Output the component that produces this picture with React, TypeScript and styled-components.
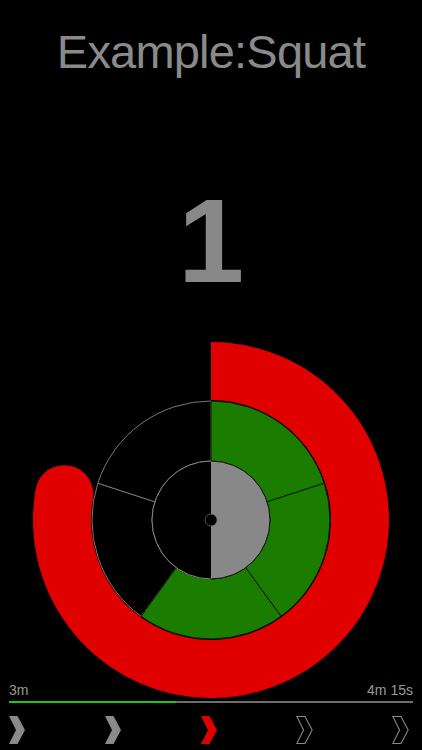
import React from 'react';
import styled, { createGlobalStyle } from 'styled-components';

const GlobalStyle = createGlobalStyle`
    html, body {
        margin: 0;
        padding: 0;
        background: #000;
    }
    body {
        font-family: 'Liberation Sans', Arial, sans-serif;
    }
`;

const Screen = styled.div`
    width: 422px;
    height: 750px;
    background: #000;
    display: flex;
    flex-direction: column;
    align-items: stretch;
    overflow: hidden;
`;

const Title = styled.h1`
    margin: 24px 0 0;
    font-size: 47px;
    line-height: 56px;
    font-weight: 400;
    letter-spacing: -0.8px;
    color: #8a8a8a;
    text-align: center;
`;

const RepCount = styled.div`
    margin-top: 101px;
    font-size: 119px;
    line-height: 119px;
    font-weight: 700;
    color: #888;
    text-align: center;
`;

const ChartWrap = styled.div`
    margin-top: 42px;
    height: 356px;
    display: flex;
    justify-content: center;
`;

const Footer = styled.div`
    margin-top: -16px;
    padding: 0 9px;
    display: flex;
    flex-direction: column;
`;

const TimeRow = styled.div`
    display: flex;
    justify-content: space-between;
    font-size: 14px;
    line-height: 16px;
    color: #9a9a9a;
`;

const Track = styled.div`
    margin-top: 3px;
    height: 2px;
    background: #6e6e6e;
    display: flex;
`;

const TrackFill = styled.div`
    height: 100%;
    background: #1fc41f;
`;

const StepRow = styled.div`
    margin-top: 13px;
    padding-right: 4px;
    display: flex;
    justify-content: space-between;
`;

type StepState = 'done' | 'current' | 'todo';

const Chevron = ({ state }: { state: StepState }) => {
    const pts = '0,0 8.5,0 16,14 8.5,28 0,28 7,14';
    if (state === 'todo') {
        return (
            <svg width="17" height="28" viewBox="-0.6 -0.6 17.2 29.2">
                <polygon points={pts} fill="none" stroke="#8a8a8a" strokeWidth="1.1" strokeLinejoin="miter" />
            </svg>
        );
    }
    return (
        <svg width="17" height="28" viewBox="0 0 17 28">
            <polygon points={pts} fill={state === 'current' ? '#e00000' : '#8a8a8a'} />
        </svg>
    );
};

// chart geometry
const CX = 211;
const CY = 178;

const pt = (r: number, deg: number) => {
    const a = (deg * Math.PI) / 180;
    return [CX + r * Math.sin(a), CY - r * Math.cos(a)];
};

const sector = (r1: number, r2: number, from: number, to: number) => {
    const large = to - from > 180 ? 1 : 0;
    const [ax, ay] = pt(r2, from);
    const [bx, by] = pt(r2, to);
    const [cx, cy] = pt(r1, to);
    const [dx, dy] = pt(r1, from);
    return `M${ax},${ay} A${r2},${r2} 0 ${large} 1 ${bx},${by} L${cx},${cy} A${r1},${r1} 0 ${large} 0 ${dx},${dy} Z`;
};

const arc = (r: number, from: number, to: number) => {
    const large = to - from > 180 ? 1 : 0;
    const [ax, ay] = pt(r, from);
    const [bx, by] = pt(r, to);
    return `M${ax},${ay} A${r},${r} 0 ${large} 1 ${bx},${by}`;
};

const segments = [
    { from: 216, to: 288, done: false },
    { from: 288, to: 360, done: false },
    { from: 0, to: 72, done: true },
    { from: 72, to: 144, done: true },
    { from: 144, to: 216, done: true },
];

const RED_SWEEP = 280;

const Chart = () => {
    const [ex, ey] = pt(149, RED_SWEEP);
    return (
        <svg width="422" height="356" viewBox="0 0 422 356">
            <path d={arc(149, 0, RED_SWEEP)} fill="none" stroke="#e00000" strokeWidth="58" />
            <circle cx={ex} cy={ey} r="29" fill="#e00000" />
            {segments.map((s) => (
                <path
                    key={s.from}
                    d={sector(59, 119, s.from, s.to)}
                    fill={s.done ? '#1b7d00' : '#000'}
                    stroke={s.done ? '#0a1a00' : '#777'}
                    strokeWidth="1"
                />
            ))}
            <path d={sector(0.01, 59, 180, 360)} fill="#000" />
            <path d={sector(0.01, 59, 0, 180)} fill="#888" />
            <path d={arc(59, 180, 360)} fill="none" stroke="#888" strokeWidth="1" />
            <path d={arc(59, 0, 180)} fill="none" stroke="#111" strokeWidth="1" />
            <circle cx={CX} cy={CY} r="6" fill="#000" stroke="#666" strokeWidth="0.8" />
        </svg>
    );
};

const steps: StepState[] = ['done', 'done', 'current', 'todo', 'todo'];
const elapsed = 0.413;

export default function App() {
    return (
        <Screen>
            <GlobalStyle />
            <Title>Example:Squat</Title>
            <RepCount>1</RepCount>
            <ChartWrap>
                <Chart />
            </ChartWrap>
            <Footer>
                <TimeRow>
                    <span>3m</span>
                    <span>4m 15s</span>
                </TimeRow>
                <Track>
                    <TrackFill style={{ width: `${elapsed * 100}%` }} />
                </Track>
                <StepRow>
                    {steps.map((s, i) => (
                        <Chevron key={i} state={s} />
                    ))}
                </StepRow>
            </Footer>
        </Screen>
    );
}
